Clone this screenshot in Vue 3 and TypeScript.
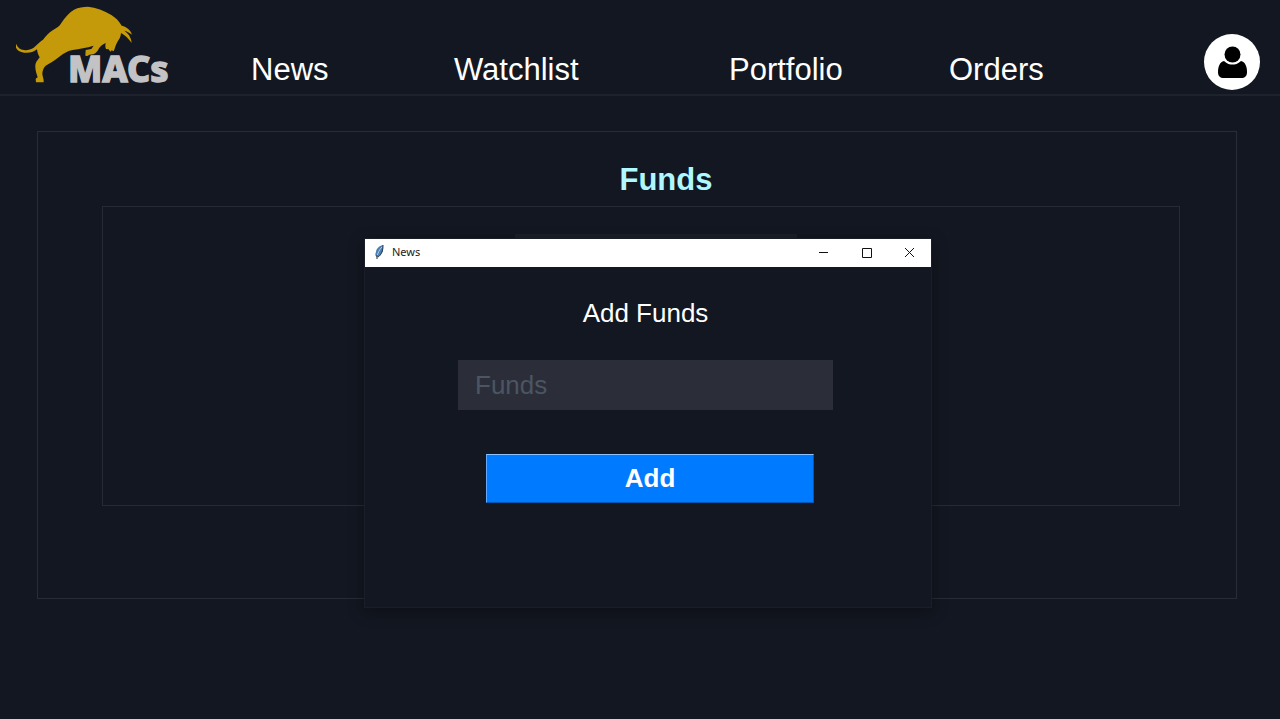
<script setup lang="ts">
import { ref } from 'vue'

interface NavLink {
  label: string
  href: string
}

const links: NavLink[] = [
  { label: 'News', href: '#news' },
  { label: 'Watchlist', href: '#watchlist' },
  { label: 'Portfolio', href: '#portfolio' },
  { label: 'Orders', href: '#orders' },
]

const amount = ref('')
</script>

<template>
  <div class="page">
    <header class="topbar">
      <a class="logo" href="#home">
        <svg viewBox="48 0 480 282" width="160" height="94">
          <path
            fill="#c4990a"
            d="M48 131 C53 142 60 149 72 150 C86 152 97 148 106 139 C113 131 122 124 129 119 C138 109 146 98 158 91 C168 85 178 80 184 69 C195 52 207 38 222 29 C235 22 250 20 264 20 C288 22 312 31 334 45 C347 53 357 63 365 77 C381 81 392 90 396 104 C387 97 381 94 373 92 C386 101 394 113 395 129 C386 117 376 106 363 99 C363 110 357 119 352 126 C347 134 345 145 341 154 L335 151 L331 155 L326 148 L318 147 C315 141 316 134 317 129 C309 133 301 138 297 145 C293 153 289 159 280 163 L268 164 L262 168 L256 167 L257 150 L274 147 L281 137 C259 143 238 147 218 150 C198 154 187 164 173 174 C161 183 148 191 137 197 C130 204 127 213 127 222 C128 231 132 238 131 247 L108 247 L107 236 L113 232 C110 222 106 212 106 202 C105 193 108 186 113 180 L119 172 C115 166 112 158 111 148 C100 157 87 160 72 158 C60 156 51 150 48 143 Z"
          />
          <text x="204" y="247" class="logo-text">MACs</text>
        </svg>
      </a>
      <a v-for="link in links" :key="link.label" class="nav-link" :href="link.href">{{ link.label }}</a>
      <button class="avatar" type="button" aria-label="Account">
        <svg viewBox="0 0 56 56" width="56" height="56">
          <path
            d="M20 27 C16 28 14 32 14 38 C14 42 16 44 20 44 H37 C41 44 43 42 43 38 C43 32 41 28 37 27 C34 30 31 30.500 28.500 30.500 C26 30.500 23 30 20 27 Z"
          />
          <ellipse cx="28.500" cy="20.500" rx="8" ry="8" />
        </svg>
      </button>
    </header>

    <main class="content">
      <section class="panel">
        <h1 class="heading">Funds</h1>
        <div class="inner">
          <div class="strip"></div>
        </div>
      </section>
    </main>

    <div class="window" role="dialog" aria-labelledby="window-title">
      <div class="titlebar">
        <svg class="feather" viewBox="0 0 10 16" width="10" height="16">
          <path d="M9 1 C5 2 2 5 2 8 C1 10 1 12 3 13 C6 12 9 9 9 5 Z" fill="#4a7fb5" />
          <path d="M9 1 C9 3 9 5 8 8 C7 10 6 12 4 13" fill="none" stroke="#22384f" />
          <path d="M8 3 C5 6 4 9 3 12" fill="none" stroke="#b9cde0" />
          <path d="M3 11 L3 15" stroke="#222" />
        </svg>
        <span id="window-title" class="title">News</span>
        <button class="win-button" type="button" aria-label="Minimize">
          <svg viewBox="0 0 11 11" width="11" height="11"><path d="M1 5.500 H10" /></svg>
        </button>
        <button class="win-button" type="button" aria-label="Maximize">
          <svg viewBox="0 0 11 11" width="11" height="11"><path d="M1.500 1.500 H10.500 V10.500 H1.500 Z" /></svg>
        </button>
        <button class="win-button" type="button" aria-label="Close">
          <svg viewBox="0 0 11 11" width="11" height="11"><path d="M1 1 L10 10 M10 1 L1 10" /></svg>
        </button>
      </div>
      <form class="form" @submit.prevent>
        <label class="form-title" for="funds">Add Funds</label>
        <input id="funds" v-model="amount" class="field" type="text" placeholder="Funds" />
        <button class="add" type="submit">Add</button>
      </form>
    </div>
  </div>
</template>

<style>
body {
  margin: 0;
  background: #131721;
}
</style>

<style scoped>
* {
  box-sizing: border-box;
}

.page {
  position: relative;
  min-height: 100vh;
  background: #131721;
  color: #fff;
  font-family: "Liberation Sans", Arial, sans-serif;
}

.topbar {
  display: grid;
  grid-template-columns: 251fr 203fr 275fr 220fr 255fr 76fr;
  align-items: end;
  height: 96px;
  border-bottom: 2px solid #1e222c;
}

.logo {
  display: block;
  height: 94px;
  padding-left: 16px;
}

.logo svg {
  display: block;
}

.logo-text {
  fill: #c3c3c5;
  stroke: #c3c3c5;
  stroke-width: 4px;
  font-family: "Noto Sans", sans-serif;
  font-size: 108px;
  font-weight: 800;
}

.nav-link {
  justify-self: start;
  margin-bottom: 6px;
  color: #fff;
  font-size: 31px;
  line-height: 36px;
  text-decoration: none;
}

.avatar {
  width: 56px;
  height: 56px;
  margin-bottom: 4px;
  padding: 0;
  border: 0;
  border-radius: 50%;
  background: #fff;
}

.avatar svg {
  display: block;
}

.content {
  padding: 35px 43px 0 37px;
}

.panel {
  padding: 30px 56px 92px 64px;
  border: 1px solid #282c35;
}

.heading {
  margin: 0 0 8px;
  padding-left: 50px;
  color: #aff8ff;
  font-size: 31px;
  line-height: 36px;
  text-align: center;
}

.inner {
  height: 300px;
  padding: 27px 0 0 30px;
  border: 1px solid #262a33;
}

.strip {
  width: 282px;
  height: 50px;
  margin: 0 auto;
  background: #1b1f2a;
}

.window {
  position: absolute;
  top: 238px;
  left: calc(50% - 276px);
  width: 568px;
  border: 1px solid #1a1e27;
  background: #131721;
  box-shadow: 0 4px 14px rgba(0, 0, 0, 0.35);
}

.titlebar {
  display: flex;
  align-items: center;
  height: 28px;
  padding: 0 0 2px 9px;
  background: #fff;
  color: #222;
}

.title {
  flex: 1;
  padding-left: 8px;
  font-family: "Noto Sans", sans-serif;
  font-size: 11px;
  line-height: 16px;
}

.win-button {
  display: flex;
  align-items: center;
  justify-content: center;
  width: 43px;
  height: 26px;
  padding: 0;
  border: 0;
  background: transparent;
}

.win-button svg {
  fill: none;
  stroke: #111;
}

.form {
  display: flex;
  flex-direction: column;
  align-items: center;
  padding: 30px 5px 104px 0;
}

.form-title {
  font-size: 26px;
  line-height: 32px;
}

.field {
  width: 375px;
  height: 50px;
  margin: 31px 0 44px;
  padding: 0 17px;
  border: 0;
  border-radius: 0;
  outline: 0;
  background: #2b2e38;
  color: #fff;
  font: 26px "Liberation Sans", Arial, sans-serif;
}

.field::placeholder {
  color: #4b5563;
  opacity: 1;
}

.add {
  width: 328px;
  height: 49px;
  margin-left: 9px;
  padding: 0;
  border: 1px solid;
  border-color: #8cc2ff #0057b8 #0057b8 #63a9f8;
  background: #007bff;
  color: #fff;
  font: bold 26px "Liberation Sans", Arial, sans-serif;
}
</style>
